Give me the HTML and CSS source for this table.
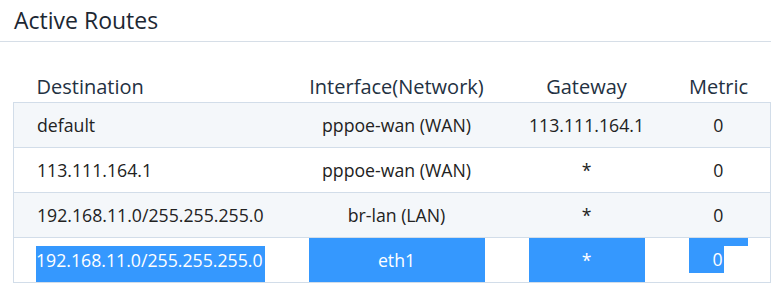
FILE: index.html
```html
<!DOCTYPE html>
<html>
<head>
<meta charset="utf-8">
<link rel="stylesheet" href="styles.css">
</head>
<body>
<div class="panel">
  <h2 class="title">Active Routes</h2>
  <table class="routes">
    <colgroup>
      <col class="c-dest"><col class="c-if"><col class="c-gw"><col class="c-metric">
    </colgroup>
    <thead>
      <tr>
        <th class="left">Destination</th>
        <th>Interface(Network)</th>
        <th>Gateway</th>
        <th>Metric</th>
      </tr>
    </thead>
    <tbody>
      <tr class="alt">
        <td class="left">default</td>
        <td>pppoe-wan (WAN)</td>
        <td>113.111.164.1</td>
        <td>0</td>
      </tr>
      <tr>
        <td class="left">113.111.164.1</td>
        <td>pppoe-wan (WAN)</td>
        <td>*</td>
        <td>0</td>
      </tr>
      <tr class="alt">
        <td class="left">192.168.11.0/255.255.255.0</td>
        <td>br-lan (LAN)</td>
        <td>*</td>
        <td>0</td>
      </tr>
      <tr class="selrow">
        <td class="left"><div class="sel sel-dest">192.168.11.0/255.255.255.0</div></td>
        <td><div class="sel sel-full">eth1</div></td>
        <td><div class="sel sel-full">*</div></td>
        <td><div class="sel sel-strip"></div><div class="sel sel-num">0</div></td>
      </tr>
    </tbody>
  </table>
</div>
</body>
</html>
```

FILE: styles.css
```css
html, body {
  margin: 0;
  padding: 0;
  background: #ffffff;
}
body {
  font-family: "Open Sans", "Noto Sans", sans-serif;
  color: #222222;
  width: 771px;
  height: 283px;
  overflow: hidden;
}
.title {
  margin: 0;
  padding: 0 0 0 14px;
  height: 41px;
  line-height: 41px;
  font-size: 23px;
  font-weight: 400;
  color: #1c2733;
  border-bottom: 1px solid #d6dee7;
}
.routes {
  margin: 32px 0 0 13px;
  width: 757px;
  border-collapse: collapse;
  table-layout: fixed;
}
.c-dest { width: 273px; }
.c-if { width: 220px; }
.c-gw { width: 160px; }
.c-metric { width: 104px; }
.routes th {
  font-size: 20px;
  font-weight: 400;
  line-height: 25px;
  padding: 0 10px 3px;
  color: #233142;
  text-align: center;
  white-space: nowrap;
}
.routes td {
  font-size: 17.7px;
  height: 44px;
  padding: 0 22px;
  text-align: center;
  vertical-align: middle;
  white-space: nowrap;
}
.routes th.left, .routes td.left {
  text-align: left;
  padding-left: 23px;
}
.routes tbody tr {
  border: 1px solid #d2dde9;
}
.routes tbody tr.alt {
  background: #f4f7fa;
}
.routes tr.selrow td {
  vertical-align: top;
  padding-top: 0;
  padding-bottom: 0;
}
.sel {
  background: #3598fe;
  color: #ffffff;
}
.sel-dest {
  margin-top: 8px;
  height: 36px;
  line-height: 28px;
  margin-left: -1px;
}
.sel-full {
  height: 44px;
  line-height: 44px;
}
.sel-strip {
  height: 8px;
}
.sel-num {
  width: 35px;
  height: 27px;
  line-height: 27px;
  text-align: right;
  padding-right: 1px;
  box-sizing: border-box;
}
```
